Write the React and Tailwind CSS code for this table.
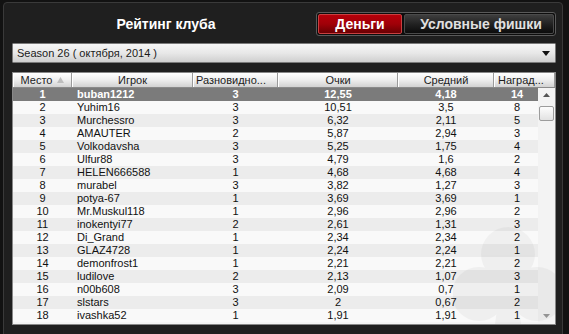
import React from "react";

const rows = [
  [1, "buban1212", 3, "12,55", "4,18", 14],
  [2, "Yuhim16", 3, "10,51", "3,5", 8],
  [3, "Murchessro", 3, "6,32", "2,11", 5],
  [4, "AMAUTER", 2, "5,87", "2,94", 3],
  [5, "Volkodavsha", 3, "5,25", "1,75", 4],
  [6, "Ulfur88", 3, "4,79", "1,6", 2],
  [7, "HELEN666588", 1, "4,68", "4,68", 4],
  [8, "murabel", 3, "3,82", "1,27", 3],
  [9, "potya-67", 1, "3,69", "3,69", 1],
  [10, "Mr.Muskul118", 1, "2,96", "2,96", 2],
  [11, "inokentyi77", 2, "2,61", "1,31", 3],
  [12, "Di_Grand", 1, "2,34", "2,34", 2],
  [13, "GLAZ4728", 1, "2,24", "2,24", 1],
  [14, "demonfrost1", 1, "2,21", "2,21", 2],
  [15, "ludilove", 2, "2,13", "1,07", 3],
  [16, "n00b608", 3, "2,09", "0,7", 1],
  [17, "slstars", 3, "2", "0,67", 2],
  [18, "ivashka52", 1, "1,91", "1,91", 1],
];

const headers = [
  { t: "Место", cls: "justify-center", arrow: true },
  { t: "Игрок", cls: "justify-center" },
  { t: "Разновидно...", cls: "justify-start pl-[2px]" },
  { t: "Очки", cls: "justify-center" },
  { t: "Средний", cls: "justify-center" },
  { t: "Наград...", cls: "justify-start pl-[3px]" },
];

export default function App() {
  const font = { fontFamily: '"Liberation Sans", Arial, sans-serif' };
  return (
    <div
      className="w-[569px] h-[334px] overflow-hidden bg-[#121212] pl-[3px] pt-[2px]"
      style={font}
    >
      <div className="w-[560px] h-[340px] rounded-t-[4px] border border-[#3a3a3a] bg-[#1f1f1f] pl-[8px] pr-[6px] pt-[9px]">
        {/* top row */}
        <div className="flex items-center h-[24px]">
          <div className="flex-1 flex justify-center text-white font-bold text-[14px] pl-[4px]">
            Рейтинг клуба
          </div>
          <div className="flex items-center h-[24px] w-[240px] rounded-[3px] border border-[#5a5a5a] bg-[#0d0d0d] p-[1px] gap-[2px]">
            <div className="h-[20px] w-[84px] flex items-center justify-center rounded-[2px] border border-[#c84040] bg-gradient-to-b from-[#b5000a] via-[#a00008] to-[#6a0003] text-white font-bold text-[14px]">
              Деньги
            </div>
            <div className="h-[20px] flex-1 flex items-center justify-center rounded-[2px] border border-[#4a4a4a] bg-gradient-to-b from-[#3e3e3e] via-[#222] to-[#0c0c0c] text-[#e0e0e0] font-bold text-[14px] pl-[4px]">
              Условные фишки
            </div>
          </div>
        </div>

        {/* dropdown */}
        <div className="mt-[7px] h-[20px] w-[544px] flex items-center justify-between border border-[#7a7a7a] rounded-[1px] bg-gradient-to-b from-[#f6f6f6] via-[#e8e8e8] to-[#cfcfcf] pl-[4px] pr-[5px]">
          <span className="text-[#1a1a1a] text-[11px]">Season 26 ( октября, 2014 )</span>
          <svg width="8" height="5" viewBox="0 0 8 5">
            <path d="M0 0 L8 0 L4 5 Z" fill="#111" />
          </svg>
        </div>

        {/* table */}
        <div className="mt-[9px] w-[544px] h-[253px] border border-[#888] bg-[#f4f4f4] relative overflow-hidden">
          <div className="grid grid-cols-[59px_121px_85px_120px_96px_61px] h-[15px] border-b border-[#8a8a8a]">
            {headers.map((h, i) => (
              <div
                key={i}
                className={`flex items-center ${h.cls} bg-gradient-to-b from-[#ffffff] via-[#eeeeee] to-[#d2d2d2] border-r border-[#9a9a9a] border-l border-l-white text-[#1c1c1c] text-[11px] leading-none`}
              >
                {h.t}
                {h.arrow && (
                  <svg className="ml-[5px]" width="7" height="6" viewBox="0 0 7 6">
                    <path d="M0 6 L3.5 0 L7 6 Z" fill="#bdbdbd" />
                  </svg>
                )}
              </div>
            ))}
          </div>
          <div className="flex relative">
            <div className="w-[525px]">
              {rows.map((r, i) => {
                const sel = i === 0;
                const bg = sel
                  ? "bg-[#7b7b7b] text-white font-bold"
                  : i % 2 === 1
                  ? "bg-[#f9f9f9] text-[#111]"
                  : "bg-[#ececec] text-[#111]";
                return (
                  <div
                    key={i}
                    className={`grid grid-cols-[59px_121px_85px_120px_96px_44px] h-[13px] items-center text-[11px] leading-none ${bg}`}
                  >
                    <div className="text-center">{r[0]}</div>
                    <div className="pl-[5px]">{r[1]}</div>
                    <div className="text-center">{r[2]}</div>
                    <div className="text-center">{r[3]}</div>
                    <div className="text-center">{r[4]}</div>
                    <div className="text-center pl-[2px]">{r[5]}</div>
                  </div>
                );
              })}
            </div>
            {/* scrollbar */}
            <div className="w-[17px] h-[236px] bg-[#f3f3f3] flex flex-col items-center">
              <svg className="mt-[5px]" width="7" height="4" viewBox="0 0 7 4">
                <path d="M0 4 L3.5 0 L7 4 Z" fill="#555" />
              </svg>
              <div className="mt-[9px] w-[15px] h-[15px] rounded-[2px] border border-[#9c9c9c] bg-gradient-to-b from-[#fdfdfd] to-[#e2e2e2]" />
              <div className="flex-1" />
              <svg className="mb-[6px]" width="7" height="4" viewBox="0 0 7 4">
                <path d="M0 0 L7 0 L3.5 4 Z" fill="#999" />
              </svg>
            </div>
            {/* watermark club */}
            <svg
              className="absolute left-[440px] top-[136px] pointer-events-none"
              width="110"
              height="130"
              viewBox="0 0 110 130"
            >
              <g fill="#000" opacity="0.035">
                <circle cx="55" cy="30" r="27" />
                <circle cx="26" cy="70" r="27" />
                <circle cx="84" cy="70" r="27" />
                <path d="M48 56 L62 56 L72 130 L38 130 Z" />
              </g>
            </svg>
          </div>
        </div>
      </div>
    </div>
  );
}
